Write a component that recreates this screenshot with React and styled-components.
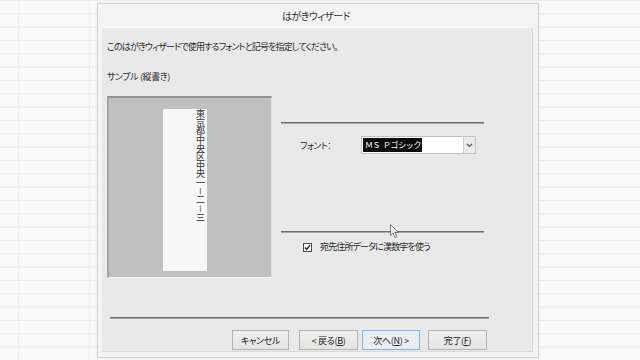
import React from "react";
import styled, { createGlobalStyle } from "styled-components";

const Global = createGlobalStyle`
  html, body { margin: 0; padding: 0; }
  body {
    font-family: "Noto Sans CJK JP", "Noto Sans", sans-serif;
    font-feature-settings: "palt";
    color: #222;
  }
`;

const Page = styled.div`
  position: relative;
  width: 640px;
  height: 360px;
  box-sizing: border-box;
  padding: 3px 0 0 97px;
  overflow: hidden;
  background-color: #f9f9f9;
  background-image:
    linear-gradient(to right, transparent 18px, #e9eff3 18px, #e9eff3 19px, transparent 19px, transparent 89px, #e9eff3 89px, #e9eff3 90px, transparent 90px),
    linear-gradient(to bottom, transparent 12.33px, #e6edf3 12.33px);
  background-size: 100% 100%, 100% 13.33px;
  background-position: 0 0, 0 1px;
`;

const Dialog = styled.div`
  width: 442px;
  height: 355px;
  box-sizing: border-box;
  border: 1px solid #d3d3d3;
  background: #f3f3f3;
  display: flex;
  flex-direction: column;
  box-shadow: 0 0 3px rgba(0, 0, 0, 0.08);
`;

const TitleBar = styled.div`
  height: 23px;
  flex: none;
  display: flex;
  align-items: center;
  justify-content: center;
  padding-right: 4px;
  font-size: 10px;
  letter-spacing: -0.6px;
  color: #333;
`;

const Panel = styled.div`
  flex: 1;
  margin: 0 5px 5px 3px;
  background: #e9e9e9;
  box-shadow: inset 1px 1px 0 #f7f7f7, inset -1px -1px 0 #dadada;
  padding: 0 0 0 6px;
  display: flex;
  flex-direction: column;
`;

const Text = styled.div`
  font-size: 9px;
  line-height: 12px;
  letter-spacing: ${(p) => p.$ls ?? -0.85}px;
  color: #2a2a2a;
  margin-top: ${(p) => p.$mt || 0}px;
  white-space: nowrap;
`;

const MainRow = styled.div`
  display: flex;
  margin-top: 13px;
  height: 182px;
`;

const SampleBox = styled.div`
  width: 165px;
  height: 182px;
  box-sizing: border-box;
  background: #c0c0c0;
  border-top: 2px solid #929292;
  border-left: 2px solid #a6a6a6;
  border-right: 1px solid #dedede;
  border-bottom: 1px solid #f2f2f2;
  padding: 11px 0 0 54px;
`;

const Strip = styled.div`
  width: 44px;
  height: 162px;
  background: #f7f7f7;
  box-sizing: border-box;
  padding-right: 2px;
  writing-mode: vertical-rl;
  font-size: 9px;
  line-height: 10px;
  letter-spacing: -0.35px;
  color: #333;
  font-feature-settings: normal;
`;

const RightCol = styled.div`
  width: 203px;
  margin-left: 9px;
  display: flex;
  flex-direction: column;
`;

const Etch = styled.div`
  border-top: 1px solid #6c6c6c;
  border-bottom: 1px solid #a9a9a9;
  margin-top: ${(p) => p.$mt}px;
  margin-left: ${(p) => p.$ml || 0}px;
  width: ${(p) => p.$w}px;
  height: 0;
`;

const FontRow = styled.div`
  display: flex;
  align-items: center;
  margin-top: 12px;
  padding-left: 19px;
  height: 18px;
`;

const Label = styled.div`
  width: 61px;
  font-size: 9px;
  letter-spacing: -0.6px;
  color: #2a2a2a;
`;

const Combo = styled.div`
  width: 115px;
  height: 18px;
  box-sizing: border-box;
  border: 1px solid #c2c2c2;
  background: #fff;
  display: flex;
  align-items: center;
  justify-content: space-between;
  padding: 0 0 0 1px;
`;

const Selected = styled.span`
  background: #0b0b0b;
  color: #fff;
  font-size: 8px;
  line-height: 14px;
  height: 14px;
  padding: 0 1px 0 2px;
  letter-spacing: -0.4px;
  font-feature-settings: normal;
  white-space: pre;
`;

const DropBtn = styled.div`
  width: 12px;
  height: 16px;
  box-sizing: border-box;
  border-left: 1px solid #cfcfcf;
  background: #ececec;
  display: flex;
  align-items: center;
  justify-content: center;
`;

const CheckRow = styled.div`
  display: flex;
  align-items: center;
  margin-top: 8px;
  margin-left: 22px;
`;

const Box = styled.div`
  width: 9px;
  height: 9px;
  box-sizing: border-box;
  border: 1px solid #4a4a4a;
  background: #fff;
  display: flex;
  align-items: center;
  justify-content: center;
  margin-right: 8px;
`;

const Buttons = styled.div`
  display: flex;
  margin-top: 11px;
  margin-left: 125px;
`;

const Button = styled.div`
  width: ${(p) => p.$w}px;
  height: 20px;
  box-sizing: border-box;
  margin-right: ${(p) => p.$mr || 0}px;
  border: 1px solid ${(p) => (p.$focus ? "#86b3e0" : "#b4b4b4")};
  background: ${(p) => (p.$focus ? "#e9eef3" : "linear-gradient(#f0f0f0, #e4e4e4)")};
  display: flex;
  align-items: center;
  justify-content: center;
  font-size: 9px;
  letter-spacing: -0.3px;
  color: #222;
  white-space: nowrap;
  u { text-decoration: underline; }
`;

const Cursor = styled.svg`
  position: absolute;
  left: 390px;
  top: 224px;
`;

export default function App() {
  return (
    <>
      <Global />
      <Page>
        <Dialog>
          <TitleBar>はがきウィザード</TitleBar>
          <Panel>
            <Text $mt={14}>このはがきウィザードで使用するフォントと記号を指定してください。</Text>
            <Text $mt={18} $ls={-0.4}>サンプル (縦書き)</Text>
            <MainRow>
              <SampleBox>
                <Strip>東京都中央区中央一－二－三</Strip>
              </SampleBox>
              <RightCol>
                <Etch $mt={26} $w={203} />
                <FontRow>
                  <Label>フォント：</Label>
                  <Combo>
                    <Selected>ＭＳ  Ｐゴシック</Selected>
                    <DropBtn>
                      <svg width="7" height="5" viewBox="0 0 7 5">
                        <path d="M1 1 L3.5 3.5 L6 1" fill="none" stroke="#555" strokeWidth="1.2" />
                      </svg>
                    </DropBtn>
                  </Combo>
                </FontRow>
                <Etch $mt={77} $w={203} />
                <CheckRow>
                  <Box>
                    <svg width="7" height="7" viewBox="0 0 7 7">
                      <path d="M1 3.5 L2.8 5.5 L6 1.2" fill="none" stroke="#222" strokeWidth="1.4" />
                    </svg>
                  </Box>
                  <Text>宛先住所データに漢数字を使う</Text>
                </CheckRow>
              </RightCol>
            </MainRow>
            <Etch $mt={39} $ml={3} $w={379} />
            <Buttons>
              <Button $w={57} $mr={10}>キャンセル</Button>
              <Button $w={59} $mr={4}>&lt; 戻る(<u>B</u>)</Button>
              <Button $w={58} $mr={8} $focus>次へ(<u>N</u>) &gt;</Button>
              <Button $w={59}>完了(<u>F</u>)</Button>
            </Buttons>
          </Panel>
        </Dialog>
        <Cursor width="10" height="15" viewBox="0 0 10 15">
          <path d="M0.5 0.5 L0.5 11.5 L3 9 L5 13.5 L6.8 12.7 L4.8 8.5 L8.3 8.5 Z" fill="#fff" stroke="#555" strokeWidth="0.9" opacity="0.85" />
        </Cursor>
      </Page>
    </>
  );
}
